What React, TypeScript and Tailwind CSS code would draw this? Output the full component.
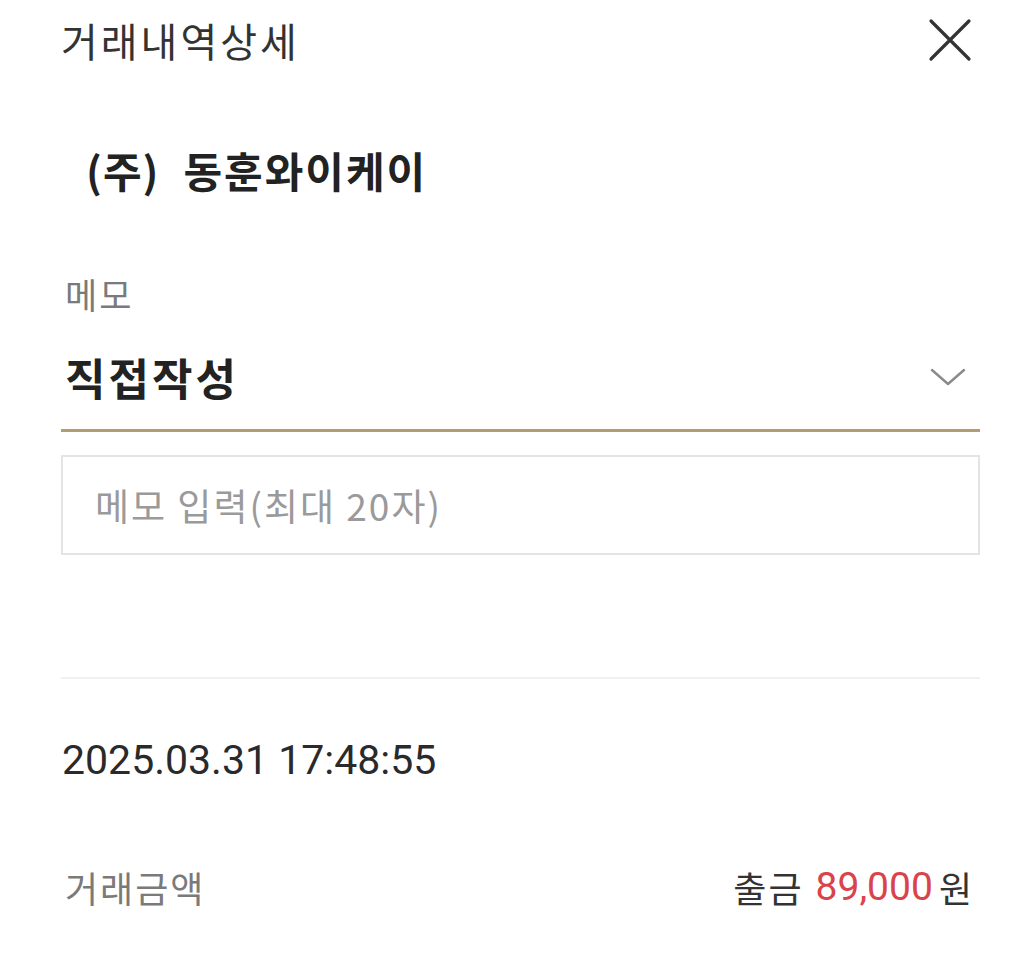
import React from "react";

const KR = { fontFamily: '"Noto Sans CJK KR", "Noto Sans", sans-serif' };
const NUM = { fontFamily: 'Roboto, "Noto Sans CJK KR", sans-serif' };

export default function App() {
  return (
    <div className="w-[1024px] min-h-[958px] bg-white pl-[61px] pr-[44px]" style={KR}>
      <div className="h-[80px] flex items-center justify-between">
        <span className="text-[40px] leading-none text-[#333] tracking-[3px]">거래내역상세</span>
        <svg width="44" height="44" viewBox="0 0 44 44" className="mr-[8px]">
          <path d="M3 3 L41 41 M41 3 L3 41" stroke="#333" strokeWidth="3.2" strokeLinecap="round" />
        </svg>
      </div>

      <div className="mt-[50px] h-[80px] flex items-center gap-[24px] pl-[25px]">
        <span className="text-[42px] leading-none font-bold text-[#222] tracking-[1px]">(주)</span>
        <span className="text-[42px] leading-none font-bold text-[#222] tracking-[2px]">동훈와이케이</span>
      </div>

      <div className="mt-[63px] h-[40px] flex items-center pl-[4px]">
        <span className="text-[35px] leading-none text-[#7a7a7a] tracking-[2px]">메모</span>
      </div>

      <div className="mt-[36px] pb-[24px] border-b-[3px] border-[#b39c74]">
        <div className="h-[56px] flex items-center justify-between pl-[4px]">
          <span className="text-[44px] leading-none font-bold text-[#222] tracking-[3px]">직접작성</span>
          <svg width="36" height="20" viewBox="0 0 36 20" className="mr-[14px]">
            <path d="M2 3 L18 17 L34 3" fill="none" stroke="#8a8a8a" strokeWidth="2.4" strokeLinecap="round" strokeLinejoin="round" />
          </svg>
        </div>
      </div>

      <div className="mt-[23px] h-[100px] border-2 border-[#e4e4e4] flex items-center pl-[32px]">
        <span className="text-[37px] leading-none text-[#9a9a9a] tracking-[2px]">메모 입력(최대 20자)</span>
      </div>

      <div className="mt-[122px] h-[2px] bg-[#f1f1f1]" />

      <div className="mt-[56px] h-[50px] flex items-center pl-[1px]">
        <span className="text-[41px] leading-none text-[#2a2a2a]" style={NUM}>2025.03.31 17:48:55</span>
      </div>

      <div className="mt-[77px] h-[50px] flex items-center justify-between pl-[4px]">
        <span className="text-[36px] leading-none text-[#7a7a7a] tracking-[2px]">거래금액</span>
        <span className="flex items-center gap-[12px] mr-[8px] text-[36px] leading-none">
          <span className="text-[#333] tracking-[2px]">출금</span>
          <span className="flex items-center gap-[6px]">
            <span className="text-[#d9434b] text-[39px]" style={NUM}>89,000</span>
            <span className="text-[#333]">원</span>
          </span>
        </span>
      </div>
    </div>
  );
}
